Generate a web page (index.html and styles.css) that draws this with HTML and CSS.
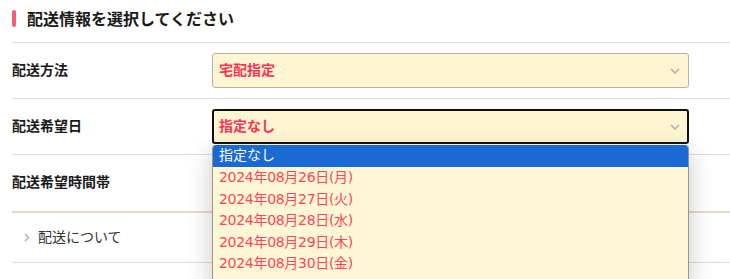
FILE: index.html
```html
<!DOCTYPE html>
<html>
<head>
    <title>配送情報</title>
    <link rel="stylesheet" href="styles.css">
</head>
<body>
    <div class="delivery">
        <h2 class="section-title">配送情報を選択してください</h2>

        <div class="form-row">
            <label class="form-label">配送方法</label>
            <div class="select-box">
                <span class="select-value">宅配指定</span>
                <svg class="select-arrow" width="10" height="6" viewBox="0 0 10 6"><path d="M1 1l4 4 4-4" fill="none" stroke="#b9aaa8" stroke-width="1.5"/></svg>
            </div>
        </div>

        <div class="form-row">
            <label class="form-label">配送希望日</label>
            <div class="select-box is-open">
                <span class="select-value">指定なし</span>
                <svg class="select-arrow" width="10" height="6" viewBox="0 0 10 6"><path d="M1 1l4 4 4-4" fill="none" stroke="#b9aaa8" stroke-width="1.5"/></svg>
                <ul class="select-menu">
                    <li class="option is-selected">指定なし</li>
                    <li class="option">2024年08月26日(月)</li>
                    <li class="option">2024年08月27日(火)</li>
                    <li class="option">2024年08月28日(水)</li>
                    <li class="option">2024年08月29日(木)</li>
                    <li class="option">2024年08月30日(金)</li>
                </ul>
            </div>
        </div>

        <div class="form-row form-row-last">
            <label class="form-label">配送希望時間帯</label>
            <div class="select-box">
                <span class="select-value">指定なし</span>
                <svg class="select-arrow" width="10" height="6" viewBox="0 0 10 6"><path d="M1 1l4 4 4-4" fill="none" stroke="#b9aaa8" stroke-width="1.5"/></svg>
            </div>
        </div>

        <div class="info-link">
            <svg class="info-arrow" width="6" height="9" viewBox="0 0 6 9"><path d="M1 1l3.5 3.5L1 8" fill="none" stroke="#b3aaa8" stroke-width="1.4"/></svg>
            <span>配送について</span>
        </div>
    </div>
</body>
</html>
```

FILE: styles.css
```css
html {
    overflow: hidden;
}
body {
    margin: 0;
    height: 100vh;
    overflow: hidden;
    background-color: #fff;
    font-family: "Noto Sans CJK JP", "Noto Sans", sans-serif;
    color: #222;
}
.delivery {
    margin-left: 12px;
}
.section-title {
    position: relative;
    margin: 0;
    height: 42px;
    padding-left: 15px;
    font-size: 16px;
    font-weight: bold;
    line-height: 36px;
    color: #1a1a1a;
    border-bottom: 1px solid #e6dadd;
}
.section-title::before {
    content: "";
    position: absolute;
    left: 0;
    top: 10px;
    width: 4px;
    height: 17px;
    border-radius: 2px;
    background-color: #f75c77;
}
.form-row {
    display: flex;
    align-items: center;
    height: 55px;
    border-bottom: 1px solid #e6dadd;
}
.form-row-last {
    height: 56px;
    border-bottom: 2px solid #e4dad3;
}
.form-label {
    width: 200px;
    padding-bottom: 4px;
    font-size: 14px;
    font-weight: bold;
    color: #1a1a1a;
}
.select-box {
    position: relative;
    display: flex;
    align-items: center;
    justify-content: space-between;
    box-sizing: border-box;
    width: 477px;
    height: 35px;
    padding: 0 6px;
    background-color: #fff7d4;
    border: 1px solid #bcaea6;
    border-radius: 3px;
}
.select-box.is-open {
    border: 2px solid #111;
    padding: 0 5px;
}
.select-value {
    padding-bottom: 4px;
    font-size: 14px;
    font-weight: bold;
    color: #ff3355;
}
.select-arrow {
    margin-right: 2px;
}
.select-menu {
    position: absolute;
    left: -2px;
    top: 34px;
    width: 477px;
    margin: 0;
    padding: 0 0 12px;
    list-style: none;
    font-family: "DejaVu Sans", "Noto Sans CJK JP", sans-serif;
    background-color: #fff7d6;
    border-left: 1px solid #9c9490;
    border-right: 1px solid #9c9490;
    border-radius: 4px 4px 0 0;
    box-sizing: border-box;
    box-shadow: 0 6px 24px rgba(0,0,0,0.22);
    overflow: hidden;
    z-index: 2;
}
.option {
    height: 21.6px;
    line-height: 20px;
    padding: 0 6px;
    font-size: 14px;
    letter-spacing: -0.3px;
    color: #ff4556;
    white-space: nowrap;
    overflow: hidden;
}
.option.is-selected {
    height: 22px;
    letter-spacing: 0;
    background-color: #1b69d3;
    color: #fff;
}
.info-link {
    display: flex;
    align-items: center;
    height: 49px;
    padding-left: 12px;
    font-size: 14px;
    color: #333;
    border-bottom: 1px solid #e6dadd;
}
.info-link span {
    padding-bottom: 3px;
}
.info-arrow {
    margin-right: 8px;
}
```
